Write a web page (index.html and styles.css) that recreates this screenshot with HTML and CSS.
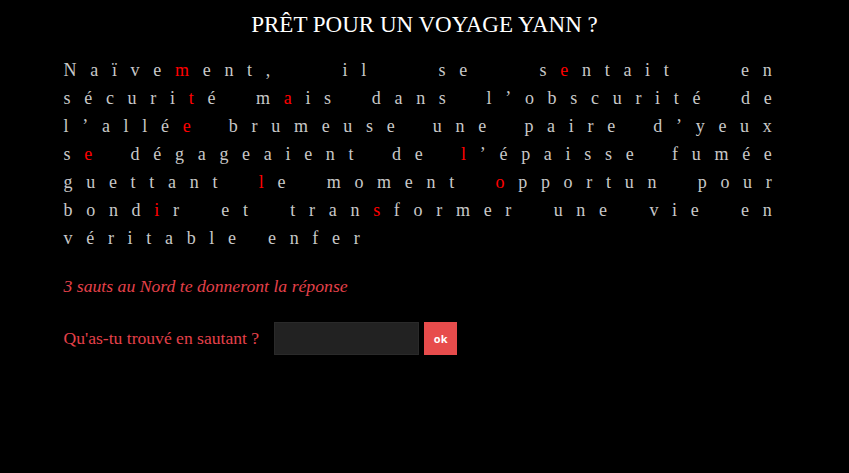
FILE: index.html
```html
<!DOCTYPE html>
<html lang="fr">
<head>
<meta charset="utf-8">
<title>Prêt pour un voyage Yann ?</title>
<link rel="stylesheet" href="styles.css">
</head>
<body>
<main class="page">
  <h1 class="title">PRÊT POUR UN VOYAGE YANN ?</h1>
  <p class="story">Naïve<span class="hl">m</span>ent, il se s<span class="hl">e</span>ntait en sécuri<span class="hl">t</span>é m<span class="hl">a</span>is dans l’obscurité de l’allé<span class="hl">e</span> brumeuse une paire d’yeux s<span class="hl">e</span> dégageaient de <span class="hl">l</span>’épaisse fumée guettant <span class="hl">l</span>e moment <span class="hl">o</span>pportun pour bond<span class="hl">i</span>r et tran<span class="hl">s</span>former une vie en véritable enfer</p>
  <p class="hint">3 sauts au Nord te donneront la réponse</p>
  <form class="answer">
    <label class="answer-label" for="answer">Qu'as-tu trouvé en sautant ?</label>
    <input class="answer-input" id="answer" type="text">
    <button class="answer-btn" type="button">ok</button>
  </form>
</main>
</body>
</html>
```
FILE: styles.css
```css
html, body {
  margin: 0;
  padding: 0;
  background: #000;
  height: 100%;
}
body {
  font-family: "Liberation Serif", "Times New Roman", serif;
}
.page {
  width: 722px;
  margin: 0 auto;
  padding-top: 10px;
}
.title {
  margin: 0;
  color: #fff;
  font-weight: normal;
  font-size: 23px;
  line-height: 30px;
  text-align: center;
}
.story {
  margin: 16px 0 0;
  color: #c8c8c8;
  font-size: 18px;
  line-height: 28px;
  letter-spacing: 13.7px;
  text-align: justify;
}
.hl {
  color: #ff0000;
}
.hint {
  margin: 22px 0 0;
  color: #e5414a;
  font-style: italic;
  font-size: 17.7px;
  line-height: 24px;
}
.answer {
  margin-top: 24px;
  display: flex;
  align-items: center;
}
.answer-label {
  color: #e5414a;
  font-size: 17.6px;
  margin-right: 15px;
}
.answer-input {
  box-sizing: border-box;
  width: 145px;
  height: 33px;
  background: #222;
  border: 1px solid #2a2a2a;
  outline: none;
  color: #ddd;
  padding: 0 8px;
  margin: 0 5px 0 0;
}
.answer-btn {
  box-sizing: border-box;
  width: 33px;
  height: 33px;
  background: #e74c4c;
  border: none;
  color: #fff;
  font-family: "Open Sans", "Liberation Sans", sans-serif;
  font-weight: bold;
  font-size: 11px;
  padding: 0;
  margin: 0;
}
```
